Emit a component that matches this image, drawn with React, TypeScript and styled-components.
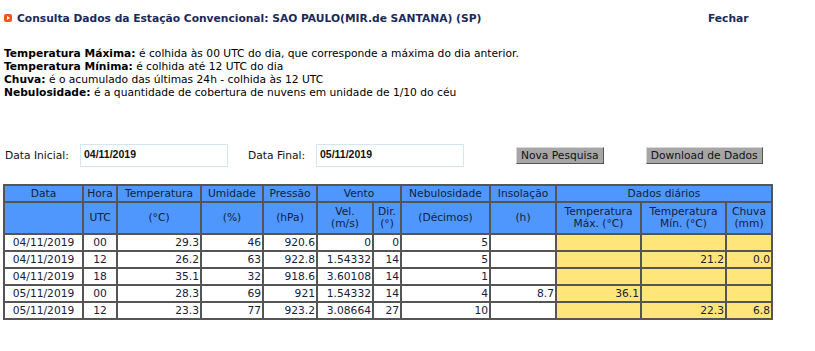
import styled, { createGlobalStyle } from "styled-components";

interface Row {
  date: string;
  hour: string;
  temp: string;
  humidity: string;
  pressure: string;
  windSpeed: string;
  windDir: string;
  clouds: string;
  sun: string;
  max: string;
  min: string;
  rain: string;
}

const rows: Row[] = [
  { date: "04/11/2019", hour: "00", temp: "29.3", humidity: "46", pressure: "920.6", windSpeed: "0", windDir: "0", clouds: "5", sun: "", max: "", min: "", rain: "" },
  { date: "04/11/2019", hour: "12", temp: "26.2", humidity: "63", pressure: "922.8", windSpeed: "1.54332", windDir: "14", clouds: "5", sun: "", max: "", min: "21.2", rain: "0.0" },
  { date: "04/11/2019", hour: "18", temp: "35.1", humidity: "32", pressure: "918.6", windSpeed: "3.60108", windDir: "14", clouds: "1", sun: "", max: "", min: "", rain: "" },
  { date: "05/11/2019", hour: "00", temp: "28.3", humidity: "69", pressure: "921", windSpeed: "1.54332", windDir: "14", clouds: "4", sun: "8.7", max: "36.1", min: "", rain: "" },
  { date: "05/11/2019", hour: "12", temp: "23.3", humidity: "77", pressure: "923.2", windSpeed: "3.08664", windDir: "27", clouds: "10", sun: "", max: "", min: "22.3", rain: "6.8" },
];

const colWidths = [79, 34, 84, 62, 54, 56, 28, 89, 66, 85, 85, 46];

const App = () => {
  return (
    <Page>
      <GlobalStyle />
      <TitleBar>
        <Title>
          <Bullet viewBox="0 0 8 8">
            <rect width="8" height="8" rx="2" fill="#f0561c" />
            <path d="M3 2 L6 4 L3 6 Z" fill="#fff" />
          </Bullet>
          Consulta Dados da Estação Convencional: SAO PAULO(MIR.de SANTANA) (SP)
        </Title>
        <CloseLink>Fechar</CloseLink>
      </TitleBar>

      <Notes>
        <p>
          <b>Temperatura Máxima:</b> é colhida às 00 UTC do dia, que corresponde a máxima do dia anterior.
        </p>
        <p>
          <b>Temperatura Mínima:</b> é colhida até 12 UTC do dia
        </p>
        <p>
          <b>Chuva:</b> é o acumulado das últimas 24h - colhida às 12 UTC
        </p>
        <p>
          <b>Nebulosidade:</b> é a quantidade de cobertura de nuvens em unidade de 1/10 do céu
        </p>
      </Notes>

      <SearchBar>
        <Label>Data Inicial:</Label>
        <DateInput defaultValue="04/11/2019" />
        <Label $gap>Data Final:</Label>
        <DateInput defaultValue="05/11/2019" />
        <Button $left={52}>Nova Pesquisa</Button>
        <Button $left={42}>Download de Dados</Button>
      </SearchBar>

      <Table>
        <colgroup>
          {colWidths.map((w, i) => (
            <col key={i} style={{ width: w }} />
          ))}
        </colgroup>
        <thead>
          <tr>
            <Th>Data</Th>
            <Th>Hora</Th>
            <Th>Temperatura</Th>
            <Th>Umidade</Th>
            <Th>Pressão</Th>
            <Th colSpan={2}>Vento</Th>
            <Th>Nebulosidade</Th>
            <Th>Insolação</Th>
            <Th colSpan={3}>Dados diários</Th>
          </tr>
          <tr>
            <Th $tall></Th>
            <Th $tall>UTC</Th>
            <Th $tall>(°C)</Th>
            <Th $tall>(%)</Th>
            <Th $tall>(hPa)</Th>
            <Th $tall>
              Vel.
              <br />
              (m/s)
            </Th>
            <Th $tall>
              Dir.
              <br />
              (°)
            </Th>
            <Th $tall>(Décimos)</Th>
            <Th $tall>(h)</Th>
            <Th $tall>
              Temperatura
              <br />
              Máx. (°C)
            </Th>
            <Th $tall>
              Temperatura
              <br />
              Mín. (°C)
            </Th>
            <Th $tall>
              Chuva
              <br />
              (mm)
            </Th>
          </tr>
        </thead>
        <tbody>
          {rows.map((r, i) => (
            <tr key={i}>
              <Td $center>{r.date}</Td>
              <Td $center>{r.hour}</Td>
              <Td>{r.temp}</Td>
              <Td>{r.humidity}</Td>
              <Td>{r.pressure}</Td>
              <Td>{r.windSpeed}</Td>
              <Td>{r.windDir}</Td>
              <Td>{r.clouds}</Td>
              <Td>{r.sun}</Td>
              <Td $daily>{r.max}</Td>
              <Td $daily>{r.min}</Td>
              <Td $daily>{r.rain}</Td>
            </tr>
          ))}
        </tbody>
      </Table>
    </Page>
  );
};

export default App;

const GlobalStyle = createGlobalStyle`
  body {
    margin: 0;
    background: #fff;
    font-family: "DejaVu Sans", Verdana, sans-serif;
    font-size: 10.7px;
    color: #000;
  }
`;

const Page = styled.div`
  width: 815px;
  padding: 11px 0 0 0;
`;

const TitleBar = styled.div`
  display: flex;
  align-items: center;
  height: 14px;
`;

const Title = styled.div`
  display: flex;
  align-items: center;
  gap: 5px;
  padding-left: 4px;
  width: 704px;
  font-weight: bold;
  color: #1b2a5c;
`;

const Bullet = styled.svg`
  width: 8px;
  height: 8px;
  flex: none;
`;

const CloseLink = styled.span`
  font-weight: bold;
  color: #1b2a5c;
`;

const Notes = styled.div`
  margin-top: 22px;
  padding-left: 4px;

  p {
    margin: 0;
    line-height: 13px;
  }
`;

const SearchBar = styled.div`
  display: flex;
  align-items: center;
  margin-top: 45px;
  padding-left: 5px;
  height: 23px;
`;

const Label = styled.span<{ $gap?: boolean }>`
  margin-left: ${({ $gap }) => ($gap ? "20px" : "0")};
  width: ${({ $gap }) => ($gap ? "68px" : "75px")};
  color: #111;
`;

const DateInput = styled.input`
  box-sizing: border-box;
  width: 148px;
  height: 23px;
  border: 1px solid #d3e6f5;
  padding: 0 3px 3px;
  font-family: "Liberation Sans", Arial, sans-serif;
  font-size: 10.5px;
  font-weight: bold;
  color: #111;
  outline: none;
`;

const Button = styled.button<{ $left: number }>`
  box-sizing: border-box;
  margin-left: ${({ $left }) => $left}px;
  height: 17px;
  padding: 0 4px;
  background: #a6a6a6;
  border: 1px solid;
  border-color: #d8d8d8 #555 #555 #d8d8d8;
  font-family: "DejaVu Sans", Verdana, sans-serif;
  font-size: 10.7px;
  color: #111;
`;

const Table = styled.table`
  margin: 17px 0 0 3px;
  border-collapse: separate;
  border-spacing: 0;
  table-layout: fixed;
  width: 768px;
  border: 1px solid #555;
`;

const Th = styled.th<{ $tall?: boolean }>`
  box-sizing: border-box;
  height: ${({ $tall }) => ($tall ? "32px" : "17px")};
  padding: 0 1px;
  border: 1px solid #555;
  background: #4f97fd;
  font-weight: normal;
  line-height: 12px;
  color: #15203a;
  text-align: center;
`;

const Td = styled.td<{ $center?: boolean; $daily?: boolean }>`
  box-sizing: border-box;
  height: 17px;
  padding: 0 1px;
  border: 1px solid #555;
  background: ${({ $daily }) => ($daily ? "#ffe57a" : "#fff")};
  line-height: 12px;
  color: #15203a;
  text-align: ${({ $center }) => ($center ? "center" : "right")};
`;
